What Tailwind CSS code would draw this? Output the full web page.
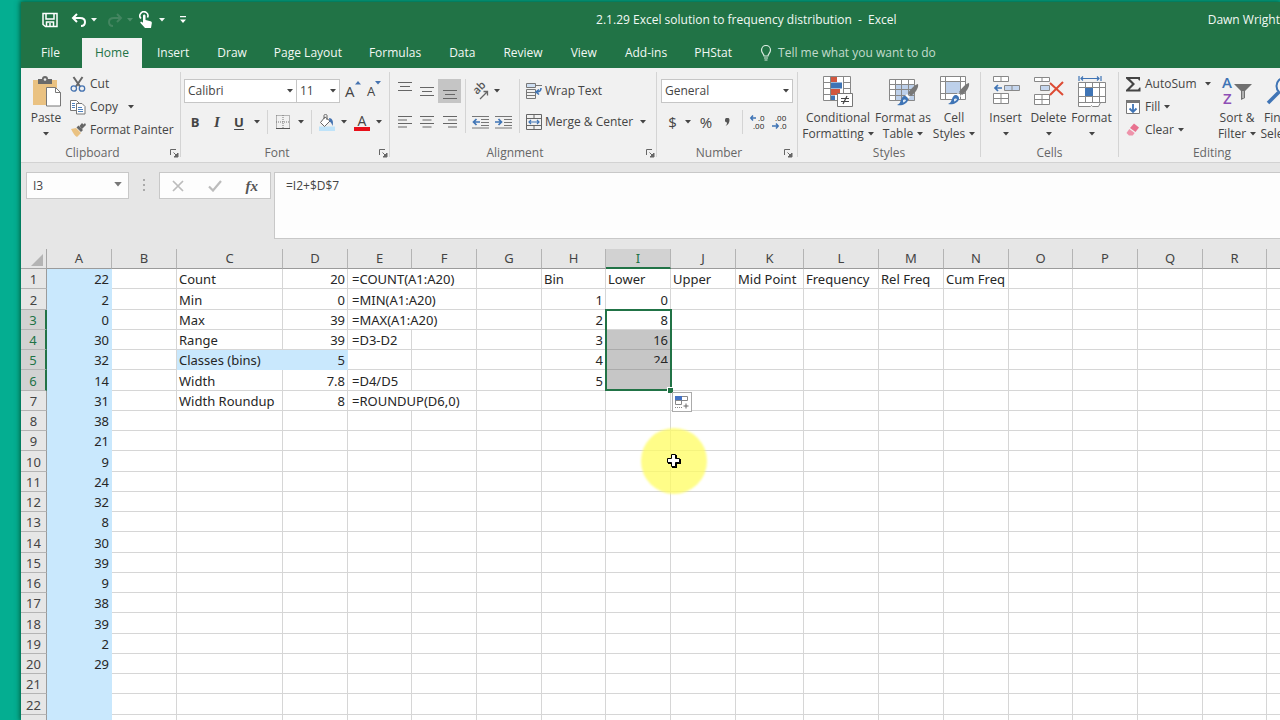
<!DOCTYPE html>
<html lang="en">
<head>
<meta charset="utf-8">
<title>2.1.29 Excel solution to frequency distribution - Excel</title>
<script src="https://cdn.jsdelivr.net/npm/@tailwindcss/browser@4"></script>
</head>
<body class="h-screen overflow-hidden bg-[#04ae91] pl-[21px] pt-0.5 font-['Open_Sans',sans-serif] text-[12px] leading-4 text-[#444]">
<svg class="hidden">
  <symbol id="caret" viewBox="0 0 6 4"><path d="M0 0h6L3 3.5z" fill="currentColor"/></symbol>
  <symbol id="launch" viewBox="0 0 9 9"><path d="M.5 6V.5H6M3.5 3.5l3 3M8 4v4H4z" fill="none" stroke="#666"/><path d="M8 4v4H4z" fill="#666"/></symbol>
  <symbol id="brush" viewBox="0 0 24 24"><path d="M23 1c1 4-3 9-7 12l-3-3c3-4 6-8 10-9z" fill="#777"/><path d="M12 11l3 3-2 2-3-3z" fill="#fff"/><path d="M9.500 13c2 0 4 2 3.500 4-1 4-6 6-11 5 3-1 3-3 4-5 .6-2 2-4 3.500-4z" fill="#3f74b5"/><path d="M8 17c1-1 3-.5 3 .5-1 1-2 2-3 2z" fill="#dbe8f6"/></symbol>
</svg>
<div class="flex h-full flex-col overflow-hidden bg-[#e6e6e6] shadow-[0_0_5px_1px_rgba(0,70,40,0.8)]">

  <header class="shrink-0 bg-[#217346] text-[#f2f8f4]">
    <div class="flex h-9 items-center pl-[20px]">
      <div class="flex shrink-0 items-center">
        <button aria-label="Save" class="mr-3"><svg width="18" height="18" viewBox="0 0 18 18" fill="none" stroke="#fff" stroke-width="1.500"><path d="M2 2.500h14v13H4.500L2 13.500zM5 2.500v5.500h8V2.500M5.500 15.500V11h7v4.500M9 12v3"/></svg></button>
        <button aria-label="Undo" class="flex items-center gap-1"><svg width="16" height="16" viewBox="0 0 16 16" fill="none" stroke="#fff" stroke-width="2"><path d="M6 2L2 6l4 4M2 6h7c3 0 5 1.500 5 4s-1.500 4-4 4"/></svg><svg width="6" height="4"><use href="#caret"/></svg></button>
        <button aria-label="Redo" class="ml-2.5 flex items-center gap-1 text-[#4f8f6c]"><svg width="16" height="16" viewBox="0 0 16 16" fill="none" stroke="#438560" stroke-width="2"><path d="M10 2l4 4-4 4M14 6H7c-3 0-5 1.500-5 4s1.500 4 4 4"/></svg><svg width="6" height="4"><use href="#caret"/></svg></button>
        <button aria-label="Touch/Mouse Mode" class="ml-1.5 flex items-center gap-1.5"><svg width="14" height="18" viewBox="0 0 14 18"><path d="M2 7.500A4 4 0 1 1 8.500 6.500" fill="none" stroke="#fff" stroke-width="1.600"/><path d="M4 5c0-2 2.500-2 2.500 0v4l5 1.200c1 .3 1.500 1 1.300 2L12 17H6l-4.500-5c-.6-1 .5-1.800 1.500-1l1 .8z" fill="#fff"/></svg><svg width="6" height="4"><use href="#caret"/></svg></button>
        <button aria-label="Customize Quick Access Toolbar" class="ml-3.5"><svg width="8" height="8" viewBox="0 0 8 8" fill="#fff"><path d="M1 0h6v1.300H1zM1 3.500h6L4 7z"/></svg></button>
      </div>
      <h1 class="flex-1 pl-[98px] text-center whitespace-pre">2.1.29 Excel solution to frequency distribution  -  Excel</h1>
      <div class="shrink-0 whitespace-nowrap">Dawn Wright</div>
    </div>
    <nav class="flex h-[30px] items-stretch gap-px pl-[6px] whitespace-nowrap">
      <button class="mr-[7px] px-3.5">File</button>
      <button class="bg-[#f1f1f1] px-[13px] text-[#217346]">Home</button>
      <button class="px-3.5">Insert</button>
      <button class="px-[13px]">Draw</button>
      <button class="px-[13px]">Page Layout</button>
      <button class="px-[13px]">Formulas</button>
      <button class="px-3.5">Data</button>
      <button class="px-[13px]">Review</button>
      <button class="px-3.5">View</button>
      <button class="px-[13px]">Add-ins</button>
      <button class="px-[13px]">PHStat</button>
      <button class="flex items-center gap-1.5 px-3.5 text-[#c3dccd]"><svg width="12" height="16" viewBox="0 0 12 16" fill="none" stroke="#d9ebe0" stroke-width="1.200"><path d="M4 11c0-2-2.500-3-2.500-6a4.500 4.500 0 0 1 9 0c0 3-2.500 4-2.500 6zM4 13h4M4.500 15h3"/></svg>Tell me what you want to do</button>
    </nav>
  </header>

  <section aria-label="Ribbon" class="flex shrink-0 border-b border-[#d2d2d2] bg-[#f1f1f1] whitespace-nowrap">
    <!-- Clipboard -->
    <div class="flex w-[159px] shrink-0 flex-col pt-1">
      <div class="flex h-[72px]">
        <button class="ml-1 flex w-[42px] flex-col items-center pt-1"><svg width="30" height="32" viewBox="-1 0 30 32"><path d="M1 4h24v25H1z" fill="#eac282"/><path d="M6 3h4a3 3 0 0 1 6 0h4v5H6z" fill="#6a6a6a"/><circle cx="13" cy="3.500" r="1.300" fill="#f1f1f1"/><path d="M14.500 11.500h9l5 5v13.500h-14z" fill="#fff" stroke="#777"/><path d="M23.500 11.500v5h5" fill="none" stroke="#777"/></svg><span class="mt-0.5">Paste</span><svg class="mt-1.5" width="6" height="4"><use href="#caret"/></svg></button>
        <div class="flex flex-col">
          <button class="flex h-[23px] items-center gap-1 pl-[3px]"><svg width="16" height="16" viewBox="0 0 16 16" fill="none"><path d="M3.500 1l6.500 9.500M12.500 1L6 10.500" stroke="#666" stroke-width="2"/><circle cx="3.800" cy="12.500" r="2.700" stroke="#4472b0" stroke-width="1.300"/><circle cx="12" cy="12.500" r="2.700" stroke="#4472b0" stroke-width="1.300"/></svg>Cut</button>
          <button class="flex h-[23px] items-center gap-1 pl-[3px]"><svg width="16" height="16" viewBox="0 0 16 16" fill="#fff" stroke="#777"><path d="M.5 1.500h6l2.500 2.500v7.500H.5z"/><path d="M2 4.500h3M2 6.500h3M2 8.500h3" stroke="#4f81bd"/><path d="M6.500 4.500h5.500l3 3v7.500H6.500z"/><path d="M8 8.500h4M8 10.500h5M8 12.500h5" stroke="#4f81bd"/></svg>Copy<svg class="ml-1.5" width="6" height="4"><use href="#caret"/></svg></button>
          <button class="flex h-[23px] items-center gap-1 pl-[3px]"><svg width="16" height="16" viewBox="0 0 16 16"><path d="M1 7l5-1 5 5-4 4c-2-1-4-4-6-8z" fill="#eac282"/><path d="M6.500 5.500l2-2 4.500 4.500-2 2zM9.500 4L12 1l1.500 1.500L15 1l1 2-4 4z" fill="#666"/></svg>Format Painter</button>
        </div>
      </div>
      <div class="flex h-[18px] items-center text-[#666]"><span class="flex-1 text-center">Clipboard</span><button aria-label="Clipboard settings" class="flex w-4 justify-end pr-px"><svg width="9" height="9"><use href="#launch"/></svg></button></div>
    </div>
    <div class="mt-1 h-[85px] w-px shrink-0 bg-[#d4d4d4]"></div>

    <!-- Font -->
    <div class="flex w-[208px] shrink-0 flex-col pt-1">
      <div class="flex h-[72px] flex-col gap-[5px] pt-[7px] pl-[3px]">
        <div class="flex h-6 items-center">
          <div class="relative"><select aria-label="Font name" class="block h-6 w-[113px] appearance-none border border-[#c6c6c6] bg-white pl-[3px]"><option>Calibri</option></select><svg class="pointer-events-none absolute top-2.5 right-1" width="6" height="4"><use href="#caret"/></svg></div>
          <div class="relative"><select aria-label="Font size" class="block h-6 w-[43px] appearance-none border border-l-0 border-[#c6c6c6] bg-white pl-[3px]"><option>11</option></select><svg class="pointer-events-none absolute top-2.5 right-1" width="6" height="4"><use href="#caret"/></svg></div>
          <button aria-label="Increase font size" class="ml-1 flex w-[23px] items-start pl-px"><span class="text-[15px] leading-6">A</span><svg class="mt-0.5" width="6" height="4" viewBox="0 0 6 4"><path d="M0 3.500h6L3 0z" fill="#4472b0"/></svg></button>
          <button aria-label="Decrease font size" class="flex w-[22px] items-start"><span class="text-[13px] leading-6">A</span><svg class="mt-0.5 text-[#4472b0]" width="6" height="4"><use href="#caret"/></svg></button>
        </div>
        <div class="flex h-7 items-center text-[13px]">
          <button class="w-[22px] font-bold">B</button>
          <button class="w-[22px] font-['Liberation_Serif',serif] text-[15px] font-bold italic">I</button>
          <button class="w-[22px] font-bold underline underline-offset-2">U</button>
          <button aria-label="Underline options" class="flex w-[13px] justify-center"><svg width="6" height="4"><use href="#caret"/></svg></button>
          <span class="ml-1 h-6 w-px bg-[#d4d4d4]"></span>
          <button aria-label="Borders" class="ml-2 flex items-center gap-2"><svg width="14" height="14" viewBox="0 0 14 14" fill="none" stroke="#777"><path d="M.5.5h13v13M.5.5v13M7 0v14M0 7h14" stroke-dasharray="1 1"/><path d="M0 13.500h14" stroke="#555"/></svg><svg width="6" height="4"><use href="#caret"/></svg></button>
          <span class="ml-[7px] h-6 w-px bg-[#d4d4d4]"></span>
          <button aria-label="Fill color" class="ml-[7px] flex items-center gap-1.5"><svg width="16" height="17" viewBox="0 0 16 17"><path d="M0 12.500h16V17H0z" fill="#bfe3f9"/><path d="M6 3L1.500 8.500l4 4L11 7z" fill="#fff" stroke="#666"/><path d="M5 5V1.500c0-1.500 3-1.500 3 0V6" fill="none" stroke="#666"/><path d="M10 4c3 0 5 3 3.500 8-1-3-2-4-3-4.500z" fill="#4472b0"/></svg><svg width="6" height="4"><use href="#caret"/></svg></button>
          <button aria-label="Font color" class="ml-[7px] flex items-center gap-1.5"><span class="flex w-4 flex-col items-center border-b-4 border-[#e8101a] text-[14px] leading-[13px]">A</span><svg width="6" height="4"><use href="#caret"/></svg></button>
        </div>
      </div>
      <div class="flex h-[18px] items-center text-[#666]"><span class="flex-1 text-center">Font</span><button aria-label="Font settings" class="flex w-4 justify-end pr-px"><svg width="9" height="9"><use href="#launch"/></svg></button></div>
    </div>
    <div class="mt-1 h-[85px] w-px shrink-0 bg-[#d4d4d4]"></div>

    <!-- Alignment -->
    <div class="flex w-[266px] shrink-0 flex-col pt-1">
      <div class="flex h-[72px] pt-[7px] pl-1">
        <div class="flex flex-col gap-[5px]">
          <div class="flex h-6 items-center">
            <button aria-label="Top align" class="flex h-6 w-[22px] justify-center pt-[3px]"><svg width="14" height="9" viewBox="0 0 14 9" stroke="#666"><path d="M0 .5h14M2 4.500h10M0 8.500h14"/></svg></button>
            <button aria-label="Middle align" class="flex h-6 w-[22px] items-center justify-center"><svg width="14" height="9" viewBox="0 0 14 9" stroke="#666"><path d="M0 .5h14M2 4.500h10M0 8.500h14"/></svg></button>
            <button aria-label="Bottom align" aria-pressed="true" class="flex h-6 w-[23px] items-end justify-center bg-[#c5c5c5] pb-1"><svg width="14" height="9" viewBox="0 0 14 9" stroke="#666"><path d="M0 .5h14M2 4.500h10M0 8.500h14"/></svg></button>
          </div>
          <div class="flex h-7 items-center">
            <button aria-label="Align left" class="flex w-[22px] justify-center"><svg width="14" height="12" viewBox="0 0 14 12" stroke="#666"><path d="M0 .5h14M0 4h9M0 7.500h14M0 11h9"/></svg></button>
            <button aria-label="Center" class="flex w-[22px] justify-center"><svg width="14" height="12" viewBox="0 0 14 12" stroke="#666"><path d="M0 .5h14M2.500 4h9M0 7.500h14M2.500 11h9"/></svg></button>
            <button aria-label="Align right" class="flex w-[23px] justify-center"><svg width="14" height="12" viewBox="0 0 14 12" stroke="#666"><path d="M0 .5h14M5 4h9M0 7.500h14M5 11h9"/></svg></button>
          </div>
        </div>
        <div class="ml-1 h-[54px] w-px bg-[#d4d4d4]"></div>
        <div class="flex w-[53px] flex-col gap-[5px] pl-1.5">
          <button aria-label="Orientation" class="flex h-6 items-center gap-1"><svg class="overflow-visible" width="18" height="18" viewBox="0 0 18 18"><text transform="translate(5,13) rotate(-45)" font-family="Open Sans" font-size="11" font-weight="600" fill="#555">ab</text><path d="M8 17L15 10M11.500 9.500H15.500V13.500" fill="none" stroke="#666" stroke-width="1.300"/></svg><svg width="6" height="4"><use href="#caret"/></svg></button>
          <div class="flex h-7 items-center gap-1.5">
            <button aria-label="Decrease indent"><svg width="17" height="14" viewBox="0 0 17 14" fill="none" stroke="#777"><path d="M0 1.500h17M9 4.500h8M9 7.500h8M9 10.500h8M0 13h17"/><path d="M8 7H2M4.500 4L1.500 7l3 3" stroke="#3f74b5" stroke-width="1.700"/></svg></button>
            <button aria-label="Increase indent"><svg width="17" height="14" viewBox="0 0 17 14" fill="none" stroke="#777"><path d="M0 1.500h17M9 4.500h8M9 7.500h8M9 10.500h8M0 13h17"/><path d="M0 7h6M3.500 4l3 3-3 3" stroke="#3f74b5" stroke-width="1.700"/></svg></button>
          </div>
        </div>
        <div class="h-[54px] w-px bg-[#d4d4d4]"></div>
        <div class="flex flex-col gap-[5px] pl-1.5">
          <button class="flex h-6 items-center gap-[3px]"><svg width="16" height="16" viewBox="0 0 16 16" fill="none"><path d="M.5.5h9v4h-9z" fill="#cfdff2" stroke="#777"/><path d="M9 2.500h7" stroke="#777"/><path d="M.5 6.500h9v9h-9zM0 9.500h9M0 12.500h9" stroke="#777"/><path d="M15 5c0 3-1 4-4.500 4M13 6.500L10 9l3 2.500" stroke="#3f74b5" stroke-width="1.600"/></svg>Wrap Text</button>
          <button class="flex h-7 items-center gap-[3px]"><svg width="16" height="16" viewBox="0 0 16 16" fill="none"><path d="M.5.5h15v15H.5zM0 4.500h16M0 11.500h16M8 0v4.500M8 11.500V16" stroke="#666"/><path d="M2.500 8h11M5 6L3 8l2 2M11 6l2 2-2 2" stroke="#3f74b5" stroke-width="1.200"/></svg>Merge &amp; Center<svg class="ml-1" width="6" height="4"><use href="#caret"/></svg></button>
        </div>
      </div>
      <div class="flex h-[18px] items-center text-[#666]"><span class="flex-1 text-center">Alignment</span><button aria-label="Alignment settings" class="flex w-4 justify-end pr-px"><svg width="9" height="9"><use href="#launch"/></svg></button></div>
    </div>
    <div class="mt-1 h-[85px] w-px shrink-0 bg-[#d4d4d4]"></div>

    <!-- Number -->
    <div class="flex w-[140px] shrink-0 flex-col pt-1">
      <div class="flex h-[72px] flex-col gap-[5px] pt-[7px] pl-1">
        <div class="relative w-[132px]"><select aria-label="Number format" class="block h-6 w-full appearance-none border border-[#c6c6c6] bg-white pl-[3px]"><option>General</option></select><svg class="pointer-events-none absolute top-2.5 right-1" width="6" height="4"><use href="#caret"/></svg></div>
        <div class="flex h-7 items-center text-[15px]">
          <button class="w-[23px]">$</button>
          <button aria-label="Currency options" class="flex w-2 justify-center"><svg width="6" height="4"><use href="#caret"/></svg></button>
          <button class="ml-1 w-5">%</button>
          <button aria-label="Comma style" class="flex w-[22px] justify-center"><svg width="5" height="8" viewBox="0 0 5 8"><path d="M0 2a2 2 0 0 1 4.500 0C4.500 5 3 7 .5 8 2 6.500 2 5.500 2 4.500A2 2 0 0 1 0 2z" fill="#555"/></svg></button>
          <span class="ml-1 h-6 w-px bg-[#d4d4d4]"></span>
          <button aria-label="Increase decimal" class="ml-[7px]"><svg class="overflow-visible" width="16" height="16" viewBox="0 0 16 16"><path d="M6 4H1M3 1.500L.8 4 3 6.500" fill="none" stroke="#3f74b5" stroke-width="1.500"/><text x="8" y="7" font-family="Open Sans" font-size="8" fill="#222">.0</text><text x="3" y="15" font-family="Open Sans" font-size="8" fill="#222">.00</text></svg></button>
          <button aria-label="Decrease decimal" class="ml-1.5"><svg class="overflow-visible" width="16" height="16" viewBox="0 0 16 16"><path d="M0 12h6M4 9.500L6.200 12 4 14.500" fill="none" stroke="#3f74b5" stroke-width="1.500"/><text x="3" y="7" font-family="Open Sans" font-size="8" fill="#222">.00</text><text x="8" y="15" font-family="Open Sans" font-size="8" fill="#222">.0</text></svg></button>
        </div>
      </div>
      <div class="flex h-[18px] items-center text-[#666]"><span class="flex-1 text-center">Number</span><button aria-label="Number settings" class="flex w-4 justify-end pr-1"><svg width="9" height="9"><use href="#launch"/></svg></button></div>
    </div>
    <div class="mt-1 h-[85px] w-px shrink-0 bg-[#d4d4d4]"></div>

    <!-- Styles -->
    <div class="flex w-[182px] shrink-0 flex-col pt-1">
      <div class="flex h-[72px] pt-1 pl-0.5">
        <button class="flex w-[76px] flex-col items-center"><svg width="32" height="32" viewBox="0 0 32 32"><path d="M1.500.5h27v24h-27z" fill="#fff"/><path d="M8 0h7v6H8zM8 13h10v6H8z" fill="#d2573f"/><path d="M8 6.500h12v6H8zM8 19.500h5v5H8z" fill="#3f74b5"/><path d="M1.500.5h27v24h-27zM8.500 0v25M21.500 0v25M1 6.500h7M21 6.500h8M1 12.500h7M21 12.500h8M1 18.500h7M21 18.500h8" fill="none" stroke="#888"/><path d="M15.500 17.500h15v13h-15z" fill="#fff" stroke="#777"/><path d="M19 22.500h8M19 25.500h8M25 20l-4 8" stroke="#444" stroke-width="1.200"/></svg><span class="mt-0.5">Conditional</span><span class="flex items-center gap-1">Formatting<svg width="6" height="4"><use href="#caret"/></svg></span></button>
        <button class="flex w-[54px] flex-col items-center"><svg width="32" height="32" viewBox="0 0 32 32"><path d="M2.500 3.500h25v21h-25z" fill="#fff"/><path d="M9 9h19v16H9z" fill="#bdd0ea"/><path d="M2.500 3.500h25v21h-25zM8.500 3v22M14.500 3v22M21.500 3v22M2 8.500h26M2 13.500h26M2 19.500h26" fill="none" stroke="#888"/><svg x="8" y="7" width="24" height="24"><use href="#brush"/></svg></svg><span class="mt-0.5">Format as</span><span class="flex items-center gap-1">Table<svg width="6" height="4"><use href="#caret"/></svg></span></button>
        <button class="flex w-[48px] flex-col items-center"><svg width="32" height="32" viewBox="0 0 32 32"><path d="M2.500.5h25v23h-25z" fill="#fff"/><path d="M8 6h14v11H8z" fill="#bdd0ea"/><path d="M2.500.5h25v23h-25zM7.500 0v24M22.500 0v24M2 5.500h26M2 17.500h26" fill="none" stroke="#888"/><svg x="8" y="6" width="24" height="24"><use href="#brush"/></svg></svg><span class="mt-0.5">Cell</span><span class="flex items-center gap-1">Styles<svg width="6" height="4"><use href="#caret"/></svg></span></button>
      </div>
      <div class="flex h-[18px] items-center justify-center text-[#666]">Styles</div>
    </div>
    <div class="mt-1 h-[85px] w-px shrink-0 bg-[#d4d4d4]"></div>

    <!-- Cells -->
    <div class="flex w-[137px] shrink-0 flex-col pt-1">
      <div class="flex h-[72px] pt-1 pl-[3px]">
        <button class="flex w-[43px] flex-col items-center"><svg width="28" height="32" viewBox="0 0 28 32" fill="#fff" stroke="#888"><path d="M1.500.5h15v5h-15zM9 .5v5M1.500 17.500h15v10h-15zM9 17.500v10M1.500 22.500h15"/><path d="M12.500 9.500h15v5h-15zM20 9.500v5" fill="#c5d6ee"/><path d="M10 12H3M6 9l-3 3 3 3" fill="none" stroke="#3f74b5" stroke-width="1.700"/></svg><span class="mt-0.5">Insert</span><svg class="mt-1.5" width="6" height="4"><use href="#caret"/></svg></button>
        <button class="flex w-[43px] flex-col items-center"><svg width="30" height="32" viewBox="0 0 30 32" fill="#fff" stroke="#888"><path d="M.5 1.500h15v4h-15zM8 1.500v4M.5 18.500h15v10h-15zM8 18.500v10M.5 23.500h15"/><path d="M6.500 9.500h9v5h-9z" fill="#c5d6ee"/><path d="M16 7l13 12M29 6L16 19" fill="none" stroke="#dd4b34" stroke-width="2"/></svg><span class="mt-0.5">Delete</span><svg class="mt-1.5" width="6" height="4"><use href="#caret"/></svg></button>
        <button class="flex w-[43px] flex-col items-center"><svg width="30" height="32" viewBox="0 0 30 32" fill="none" stroke="#888"><path d="M1.500 6.500h27v20h-5l-2 4h-6l-1-1-1 1h-12z" fill="#fff"/><path d="M8.500 6v20M15.500 6v20M22.500 6v20M1 11.500h28M1 20.500h28M1 26.500h28"/><path d="M8 12h8v8H8z" fill="#3f74b5" stroke="none"/><path d="M2 0v5M24 0v5M4 2.500h18M6 .5l-2 2 2 2M20 .5l2 2-2 2" stroke="#3f74b5" stroke-width="1.200"/></svg><span class="mt-0.5">Format</span><svg class="mt-1.5" width="6" height="4"><use href="#caret"/></svg></button>
      </div>
      <div class="flex h-[18px] items-center justify-center text-[#666]">Cells</div>
    </div>
    <div class="mt-1 h-[85px] w-px shrink-0 bg-[#d4d4d4]"></div>

    <!-- Editing -->
    <div class="flex w-[186px] shrink-0 flex-col pt-1">
      <div class="flex h-[72px] pl-1.5">
        <div class="flex w-[90px] flex-col">
          <button class="flex h-[23px] items-center gap-1"><svg width="16" height="16" viewBox="0 0 16 16"><path d="M1 1h14v3.500h-1L13 3H5l5 5-5.500 5.500H13l1.500-2h1V15.500H1V14l6-6-6-5.500z" fill="#444"/></svg>AutoSum<svg class="ml-1" width="6" height="4"><use href="#caret"/></svg></button>
          <button class="flex h-[23px] items-center gap-1"><svg width="16" height="16" viewBox="0 0 16 16" fill="none"><path d="M1.500 1.500h13v13h-13z" fill="#fff" stroke="#777"/><path d="M1 1h14v3H1z" fill="#777"/><path d="M8 5v8M4.500 9.500L8 13l3.500-3.500" stroke="#3f74b5" stroke-width="1.800"/></svg>Fill<svg width="6" height="4"><use href="#caret"/></svg></button>
          <button class="flex h-[23px] items-center gap-1"><svg width="16" height="16" viewBox="0 0 16 16"><path d="M9 1.500l5 4-3.500 4.500L5 6z" fill="#e8718f"/><path d="M4.300 7l5.400 4-2 2.500H4L1.500 11z" fill="#ee93aa"/></svg>Clear<svg width="6" height="4"><use href="#caret"/></svg></button>
        </div>
        <button class="flex w-[44px] flex-col items-center pt-1"><svg class="overflow-visible" width="30" height="32" viewBox="0 0 30 32"><text x="0" y="12" font-family="Open Sans" font-size="15" font-weight="600" fill="#3f74b5">A</text><text x="1" y="28" font-family="Open Sans" font-size="15" font-weight="600" fill="#8e4fb5">Z</text><path d="M12 8h18l-7 7v7l-4 2v-9z" fill="#707070"/><path d="M21 15v7" stroke="#f1f1f1"/></svg><span class="mt-0.5">Sort &amp;</span><span class="flex items-center gap-1">Filter<svg width="6" height="4"><use href="#caret"/></svg></span></button>
        <button class="flex w-[46px] flex-col items-center pt-1"><svg width="32" height="32" viewBox="0 0 32 32" fill="none" stroke="#3f74b5"><circle cx="19" cy="10" r="8.500" stroke-width="2"/><path d="M12.500 16.500L2 27" stroke-width="3.500"/></svg><span class="mt-0.5">Find &amp;</span><span class="flex items-center gap-1">Select<svg width="6" height="4"><use href="#caret"/></svg></span></button>
      </div>
      <div class="flex h-[18px] items-center justify-center text-[#666]">Editing</div>
    </div>
  </section>

  <section aria-label="Formula bar" class="flex shrink-0 items-start pt-[9px] pb-2.5 pl-[5px]">
    <div class="relative"><input aria-label="Name box" value="I3" class="block h-[27px] w-[103px] border border-[#c8c8c8] bg-[#fdfdfd] pl-1.5"><svg class="absolute top-2.5 right-[7px] text-[#777]" width="8" height="5"><use href="#caret"/></svg></div>
    <svg class="mt-[7px] ml-[14px]" width="3" height="12" viewBox="0 0 3 12" fill="#aaa"><path d="M0 0h2v2H0zM0 5h2v2H0zM0 10h2v2H0z"/></svg>
    <div class="ml-[13px] flex h-[27px] w-[112px] items-center justify-around border border-[#c8c8c8] bg-[#fdfdfd]">
      <button aria-label="Cancel"><svg width="12" height="12" viewBox="0 0 12 12" stroke="#bcbcbc" stroke-width="1.700"><path d="M1 1l10 10M11 1L1 11"/></svg></button>
      <button aria-label="Enter"><svg width="14" height="12" viewBox="0 0 14 12" fill="none" stroke="#bcbcbc" stroke-width="2.200"><path d="M1 6.500L5 10.500 13 1"/></svg></button>
      <button class="font-['Liberation_Serif',serif] text-[15px] font-bold text-[#555] italic">fx</button>
    </div>
    <textarea aria-label="Formula" class="ml-[3px] block h-[67px] flex-1 resize-none border border-r-0 border-[#c8c8c8] bg-[#fdfdfd] pt-[5px] pl-[11px] leading-4">=I2+$D$7</textarea>
  </section>

  <main class="relative shrink-0">
    <table class="h-[486px] w-[1310px] table-fixed border-separate border-spacing-0 bg-white font-['Noto_Sans','Open_Sans',sans-serif] text-[13px] leading-[18px] text-[#262626]">
      <colgroup id="cols"></colgroup>
      <thead><tr id="head" class="h-5"></tr></thead>
      <tbody id="grid"></tbody>
    </table>
    <!-- Selection I3:I6, fill handle and auto fill button -->
    <div class="pointer-events-none absolute top-[60px] left-[584px] h-[82px] w-[67px] border-2 border-[#217346]"></div>
    <div class="absolute top-[138px] left-[646px] size-[6px] border-t border-l border-white bg-[#217346]"></div>
    <button aria-label="Auto fill options" class="absolute top-[143px] left-[651px] flex size-5 items-center justify-center border border-[#ababab] bg-white"><svg width="14" height="14" viewBox="0 0 14 14" fill="none" stroke="#888"><path d="M.5 1.500h12v4H.5z"/><path d="M0 1h7v5H0z" fill="#4472c4" stroke="none"/><path d="M.5 5.500h6v4h-6z"/><path d="M0 12.500h7" stroke-dasharray="1 1"/><path d="M11 8.500v5M8.500 11h5" stroke="#666"/></svg></button>
    <!-- Highlighted pointer -->
    <div class="pointer-events-none absolute top-[179px] left-[620px] flex size-[66px] items-center justify-center rounded-full bg-[#fffc60]/75 blur-[1px]"></div>
    <svg class="pointer-events-none absolute top-[204px] left-[645px]" width="16" height="16" viewBox="0 0 16 16"><path d="M6 2h5v4h4v5h-4v4H6v-4H2V6h4z" fill="#000"/><path d="M5.500 1.500h4v4h4v4h-4v4h-4v-4h-4v-4h4z" fill="#fff" stroke="#000"/></svg>
  </main>
</div>

<script>
const widths = [26,65,65,106,65,64,65,65,64,65,65,68,75,65,65,64,65,65,64,65];
const letters = 'ABCDEFGHIJKLMNOPQRS';
const A = [22,2,0,30,32,14,31,38,21,9,24,32,8,30,39,9,38,39,2,29];
const cells = {
  C1:'Count', D1:20, E1:'=COUNT(A1:A20)', C2:'Min', D2:0, E2:'=MIN(A1:A20)',
  C3:'Max', D3:39, E3:'=MAX(A1:A20)', C4:'Range', D4:39, E4:'=D3-D2',
  C5:'Classes (bins)', D5:5, C6:'Width', D6:7.8, E6:'=D4/D5',
  C7:'Width Roundup', D7:8, E7:'=ROUNDUP(D6,0)',
  H1:'Bin', I1:'Lower', J1:'Upper', K1:'Mid Point', L1:'Frequency', M1:'Rel Freq', N1:'Cum Freq',
  H2:1, H3:2, H4:3, H5:4, H6:5, I2:0, I3:8, I4:16, I5:24
};
A.forEach((v, i) => { cells['A' + (i + 1)] = v; });
const wide = ['E1','E2','E3','E7'];
const blue = ['C5','D5'];

document.getElementById('cols').innerHTML = widths.map(w => `<col style="width:${w}px">`).join('');
document.getElementById('head').innerHTML =
  '<th aria-label="Select all" class="border-r border-b border-[#a6a6a6] bg-[#e6e6e6] p-0"><svg class="ml-auto mr-[3px] mt-[3px]" width="12" height="12" viewBox="0 0 12 12"><path d="M12 0v12H0z" fill="#b4b4b4"/></svg></th>' +
  [...letters].map(l => l === 'I'
    ? '<th class="border-r border-b-2 border-r-[#b4b4b4] border-b-[#217346] bg-[#d2d2d2] p-0 align-top font-normal text-[#217346]">I</th>'
    : `<th class="border-r border-b border-r-[#b4b4b4] border-b-[#9b9b9b] bg-[#e6e6e6] p-0 align-top font-normal text-[#444]">${l}</th>`).join('');

let rows = '';
for (let r = 1; r <= 23; r++) {
  const picked = r >= 3 && r <= 6;
  rows += `<tr class="h-5"><th class="${picked
    ? 'border-r-2 border-b border-r-[#217346] border-b-[#b4b4b4] bg-[#d2d2d2] p-0 align-bottom font-normal text-[#217346]'
    : 'border-r border-b border-r-[#9b9b9b] border-b-[#b4b4b4] bg-[#e6e6e6] p-0 align-bottom font-normal text-[#444]'}">${r}</th>`;
  for (let c = 0; c < letters.length; c++) {
    const key = letters[c] + r;
    const v = cells[key];
    let look = 'border-r border-b border-[#d6d6d6]';
    if (letters[c] === 'A' || blue.includes(key)) look = 'border-r border-b border-[#c9e8fd] bg-[#c9e8fd]';
    if (letters[c] === 'I' && r > 3 && r < 7) look = 'border-r border-b border-r-[#d6d6d6] border-b-[#ababab] bg-[#c6c6c6]';
    const align = typeof v === 'number' ? 'text-right pr-0.5' : letters[c] === 'E' ? 'text-left pl-1' : 'text-left pl-0.5';
    const span = wide.includes(key) ? ' colspan="2"' : '';
    const body = key === 'I5' ? '<div class="mb-1.5 h-3 overflow-hidden">24</div>' : (v ?? '');
    rows += `<td${span} class="${look} ${align} py-0 align-bottom whitespace-nowrap">${body}</td>`;
    if (span) c++;
  }
  rows += '</tr>';
}
document.getElementById('grid').innerHTML = rows;
</script>
</body>
</html>
